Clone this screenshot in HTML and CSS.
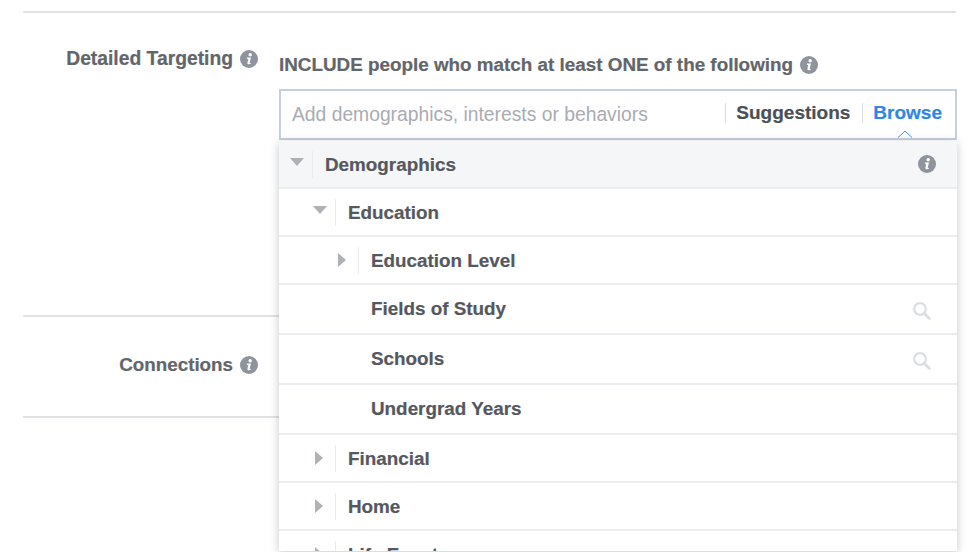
FILE: index.html
```html
<!DOCTYPE html>
<html lang="en">
<head>
<meta charset="utf-8">
<title>Detailed Targeting</title>
<link rel="stylesheet" href="styles.css">
</head>
<body>
<svg class="defs" width="0" height="0" aria-hidden="true">
  <symbol id="info" viewBox="0 0 18 18">
    <circle cx="9" cy="9" r="9" fill="currentColor"/>
    <circle cx="10.2" cy="4.7" r="1.7" fill="#fff"/>
    <path d="M6.9 7.5h4.1l-1.3 5.2c-.1.4.4.5 1 .1l.3.7c-1.1 1-3.8 1.4-3.6-.5l.8-3.9-1.3-.4z" fill="#fff"/>
  </symbol>
  <symbol id="search" viewBox="0 0 18 18">
    <circle cx="7" cy="7" r="5.8" fill="none" stroke="currentColor" stroke-width="2.2"/>
    <path d="M11.2 11.2l5.2 5.2" fill="none" stroke="currentColor" stroke-width="2.8" stroke-linecap="round"/>
  </symbol>
</svg>
<main class="page">
  <section class="section targeting">
    <div class="label">Detailed Targeting <svg class="info"><use href="#info"/></svg></div>
    <div class="field">
      <div class="include">INCLUDE people who match at least ONE of the following <svg class="info"><use href="#info"/></svg></div>
      <div class="searchbox">
        <span class="placeholder">Add demographics, interests or behaviors</span>
        <span class="tab">Suggestions</span>
        <span class="tab active">Browse
          <svg class="caret" width="16" height="8" viewBox="0 0 16 8"><path d="M1 7.5L8 1l7 6.5" fill="none" stroke="#4a90e2" stroke-width="1"/></svg>
        </span>
      </div>
    </div>
  </section>
  <section class="section connections">
    <div class="label">Connections <svg class="info"><use href="#info"/></svg></div>
  </section>
  <div class="rule"></div>

  <ul class="menu">
    <li class="row head l0">
      <i class="arrow down"></i><span class="name">Demographics</span>
      <svg class="info end"><use href="#info"/></svg>
    </li>
    <li class="row l1"><i class="arrow down"></i><span class="name">Education</span></li>
    <li class="row l2"><i class="arrow right"></i><span class="name">Education Level</span></li>
    <li class="row leaf tall"><span class="name">Fields of Study</span><svg class="search"><use href="#search"/></svg></li>
    <li class="row leaf tall"><span class="name">Schools</span><svg class="search"><use href="#search"/></svg></li>
    <li class="row leaf tall"><span class="name">Undergrad Years</span></li>
    <li class="row l1"><i class="arrow right"></i><span class="name">Financial</span></li>
    <li class="row l1"><i class="arrow right"></i><span class="name">Home</span></li>
    <li class="row l1"><i class="arrow right"></i><span class="name">Life Events</span></li>
  </ul>
</main>
</body>
</html>
```
FILE: styles.css
```css
html, body {
  margin: 0;
  padding: 0;
  height: 552px;
  overflow: hidden;
  background: #fff;
}
body {
  font-family: "Liberation Sans", Arial, sans-serif;
  font-weight: 700;
  color: #606770;
  -webkit-text-stroke: .2px;
}
.defs { position: absolute; }
.page {
  position: relative;
  height: 552px;
  padding: 11px 18px 0 23px;
  overflow: hidden;
}
.section {
  display: flex;
  border-top: 2px solid #e0e2e5;
}
.targeting { height: 302px; }
.connections { height: 99px; }
.rule { border-top: 2px solid #e0e2e5; }
.label {
  width: 235px;
  flex: none;
  display: flex;
  justify-content: flex-end;
  align-items: center;
  gap: 7px;
  height: 24px;
  font-size: 19.3px;
  color: #62656a;
}
.targeting .label { margin-top: 34px; }
.connections .label {
  margin-top: 36px;
  font-size: 18.8px;
}
.info {
  width: 18px;
  height: 18px;
  flex: none;
  color: #8d949e;
}
.field {
  margin-left: 21px;
  flex: 1;
  margin-top: 40px;
}
.include {
  display: flex;
  align-items: center;
  gap: 7px;
  height: 24px;
  font-size: 18.85px;
  color: #62656a;
}
.searchbox {
  margin-top: 12px;
  margin-right: -1px;
  height: 47px;
  border: 2px solid #c4cfe0;
  display: flex;
  align-items: center;
  padding: 0 13px 0 11px;
  font-size: 19px;
}
.placeholder {
  flex: 1;
  font-size: 19.3px;
  font-weight: 400;
  color: #a9acb2;
  -webkit-text-stroke: 0;
}
.tab {
  position: relative;
  border-left: 1px solid #dadde1;
  padding-left: 10px;
  margin-left: 12px;
  line-height: 20px;
  color: #4b4f56;
  margin-top: -4px;
}
.tab.active { color: #2e87e6; }
.caret {
  position: absolute;
  left: 34px;
  top: 27px;
}
.menu {
  position: absolute;
  left: 279px;
  top: 141px;
  width: 678px;
  height: 410px;
  margin: 0;
  padding: 0;
  list-style: none;
  background: #fff;
  overflow: hidden;
  box-shadow: 0 2px 9px rgba(0, 0, 0, .22);
}
.row {
  display: flex;
  align-items: center;
  box-sizing: border-box;
  height: 48px;
  border-bottom: 2px solid #ebedf0;
  font-size: 18.85px;
  color: #55585e;
}
.row.tall { height: 50px; }
.row:not(.tall) .name { margin-top: 2px; }
.row.head { background: #f5f6f7; }
.l0 { padding-left: 11px; }
.l1 { padding-left: 34px; }
.l2 { padding-left: 57px; }
.leaf { padding-left: 92px; }
.arrow {
  position: relative;
  flex: none;
  display: block;
  width: 23px;
  height: 27px;
  margin-right: 12px;
}
.arrow::before {
  content: "";
  position: absolute;
  width: 0;
  height: 0;
}
.arrow::after {
  content: "";
  position: absolute;
  right: 0;
  top: 0;
  bottom: 0;
  width: 1px;
  background: #e9ebee;
}
.arrow.down::before {
  left: 0;
  top: 7px;
  border-left: 7.5px solid transparent;
  border-right: 7.5px solid transparent;
  border-top: 8px solid #aeb1b6;
}
.arrow.right::before {
  left: 2px;
  top: 6px;
  border-top: 7.5px solid transparent;
  border-bottom: 7.5px solid transparent;
  border-left: 8px solid #aeb1b6;
}
.info.end {
  margin-left: auto;
  margin-right: 21px;
}
.search {
  width: 18px;
  height: 18px;
  margin-left: auto;
  margin-right: 26px;
  margin-top: 3px;
  color: #dcdee3;
}
```
